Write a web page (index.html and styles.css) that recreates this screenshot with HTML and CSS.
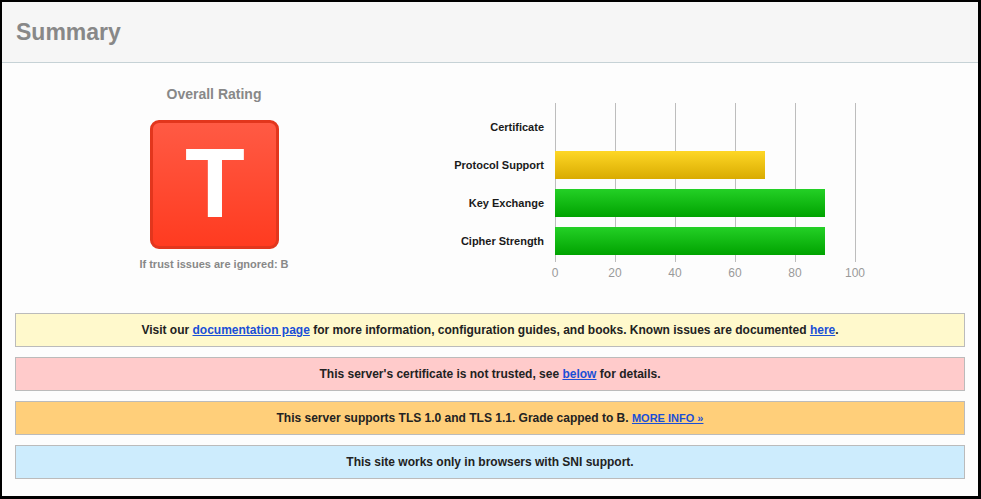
FILE: index.html
```html
<!DOCTYPE html>
<html>
<head>
<meta charset="utf-8">
<link rel="stylesheet" href="styles.css">
</head>
<body>
<div class="panel">
  <div class="panel-header"><h1 class="title">Summary</h1></div>
  <div class="overview">
    <div class="rating">
      <div class="rating-title">Overall Rating</div>
      <div class="grade">T</div>
      <div class="rating-note">If trust issues are ignored: B</div>
    </div>
    <div class="chart">
      <div class="chart-labels">
        <div class="chart-label">Certificate</div>
        <div class="chart-label">Protocol Support</div>
        <div class="chart-label">Key Exchange</div>
        <div class="chart-label">Cipher Strength</div>
      </div>
      <div class="chart-body">
        <div class="plot">
          <div class="row"><div class="bar bar-green" style="width:0px"></div></div>
          <div class="row"><div class="bar bar-yellow" style="width:210px"></div></div>
          <div class="row"><div class="bar bar-green" style="width:270px"></div></div>
          <div class="row"><div class="bar bar-green" style="width:270px"></div></div>
        </div>
        <div class="axis">
          <span>0</span><span>20</span><span>40</span><span>60</span><span>80</span><span>100</span>
        </div>
      </div>
    </div>
  </div>
  <div class="notices">
    <div class="notice notice-info">Visit our <a href="#">documentation page</a> for more information, configuration guides, and books. Known issues are documented <a href="#">here</a>.</div>
    <div class="notice notice-error">This server's certificate is not trusted, see <a href="#">below</a> for details.</div>
    <div class="notice notice-warning">This server supports TLS 1.0 and TLS 1.1. Grade capped to B. <a href="#" class="more">MORE INFO &raquo;</a></div>
    <div class="notice notice-note">This site works only in browsers with SNI support.</div>
  </div>
</div>
</body>
</html>
```

FILE: styles.css
```css
html, body {
  margin: 0;
  padding: 0;
  background: #fdfdfd;
}

.panel {
  box-sizing: border-box;
  width: 981px;
  height: 499px;
  border-style: solid;
  border-color: #000;
  border-width: 2px 3px 3px 2px;
  background: #fdfdfd;
  font-family: "Liberation Sans", Arial, sans-serif;
  overflow: hidden;
}

.panel-header {
  height: 60px;
  background: #f6f6f6;
  border-bottom: 1px solid #c6d2d6;
  display: flex;
  align-items: center;
  padding-left: 14px;
}

.title {
  margin: 0;
  font-size: 23px;
  font-weight: bold;
  color: #888888;
}

.overview {
  display: flex;
  height: 250px;
}

.rating {
  width: 424px;
  display: flex;
  flex-direction: column;
  align-items: center;
  padding-top: 23px;
}

.rating-title {
  font-size: 14px;
  line-height: 16px;
  font-weight: bold;
  color: #888888;
}

.grade {
  box-sizing: border-box;
  margin-top: 18px;
  width: 129px;
  height: 129px;
  border: 3px solid #e2361d;
  border-radius: 9px;
  background: linear-gradient(to bottom, #ff5a44 0%, #ff3b20 100%);
  color: #ffffff;
  font-size: 98px;
  font-weight: bold;
  line-height: 121px;
  text-align: center;
  text-indent: 2px;
}

.rating-note {
  margin-top: 9px;
  font-size: 11px;
  line-height: 13px;
  font-weight: bold;
  color: #888888;
}

.chart {
  display: flex;
  padding-top: 40px;
}

.chart-labels {
  width: 118px;
  padding-top: 5px;
  margin-right: 11px;
}

.chart-label {
  height: 38px;
  line-height: 38px;
  text-align: right;
  font-size: 11px;
  font-weight: bold;
  color: #1a1a1a;
}

.chart-body {
  width: 301px;
}

.plot {
  padding: 5px 0 2px 0;
  background: repeating-linear-gradient(to right, #bdbdbd 0, #bdbdbd 1px, transparent 1px, transparent 60px);
}

.row {
  height: 38px;
  padding-top: 5px;
  box-sizing: border-box;
}

.bar {
  height: 28px;
}

.bar-yellow {
  background: linear-gradient(to bottom, #fed726 0%, #d9ab00 100%);
}

.bar-green {
  background: linear-gradient(to bottom, #24d026 0%, #00a300 100%);
}

.axis {
  display: grid;
  grid-template-columns: repeat(6, 60px);
  margin-left: -30px;
  margin-top: 4px;
}

.axis span {
  text-align: center;
  font-size: 12px;
  line-height: 14px;
  color: #9a9a9a;
}

.notices {
  display: flex;
  flex-direction: column;
  gap: 10px;
  padding: 0 13px;
}

.notice {
  box-sizing: border-box;
  height: 34px;
  border: 1px solid #bbbbbb;
  text-align: center;
  font-size: 12px;
  line-height: 32px;
  font-weight: bold;
  color: #222222;
}

.notice a {
  color: #1a4fd6;
  text-decoration: underline;
}

.notice a.more {
  font-size: 11px;
}

.notice-info { background: #fff9cc; }
.notice-error { background: #ffcbcb; }
.notice-warning { background: #ffcf7a; }
.notice-note { background: #cdecfd; }
```
